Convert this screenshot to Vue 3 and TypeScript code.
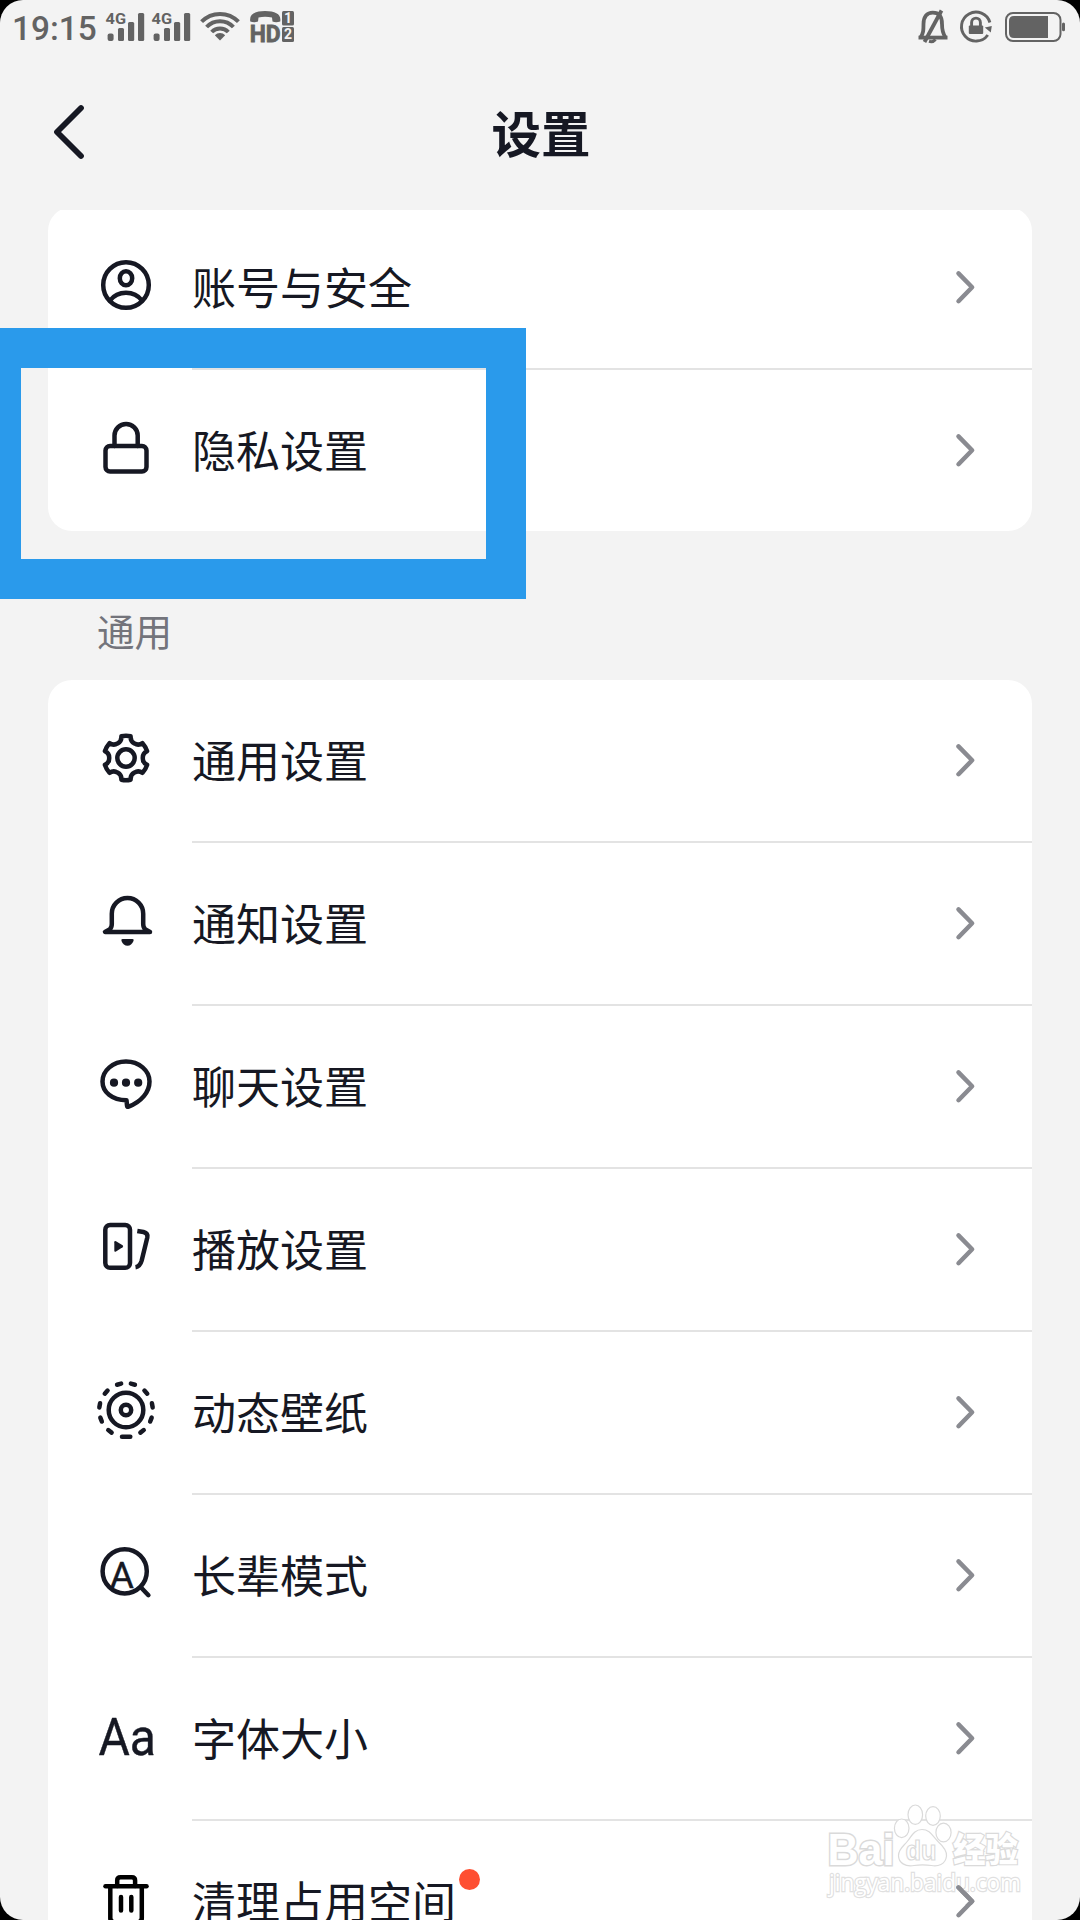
<script setup lang="ts">
type IconName =
  | 'account' | 'lock' | 'gear' | 'bell' | 'chat'
  | 'play' | 'wallpaper' | 'elder' | 'font' | 'trash'

interface Item {
  icon: IconName
  label: string
  dot?: boolean
}

interface Group {
  title?: string
  items: Item[]
}

const groups: Group[] = [
  {
    items: [
      { icon: 'account', label: '账号与安全' },
      { icon: 'lock', label: '隐私设置' },
    ],
  },
  {
    title: '通用',
    items: [
      { icon: 'gear', label: '通用设置' },
      { icon: 'bell', label: '通知设置' },
      { icon: 'chat', label: '聊天设置' },
      { icon: 'play', label: '播放设置' },
      { icon: 'wallpaper', label: '动态壁纸' },
      { icon: 'elder', label: '长辈模式' },
      { icon: 'font', label: '字体大小' },
      { icon: 'trash', label: '清理占用空间', dot: true },
    ],
  },
]

/* Point on the 60×60 icon grid; 0° points up, angles run clockwise. */
const polar = (r: number, deg: number): string => {
  const a = (deg * Math.PI) / 180
  return `${(30 + r * Math.sin(a)).toFixed(2)} ${(30 - r * Math.cos(a)).toFixed(2)}`
}

/* Six-toothed cog outline. */
const gearPath = ((): string => {
  let d = `M${polar(22.2, -12)}`
  for (let k = 0; k < 6; k++) {
    const a = k * 60
    d += `Q${polar(22.7, a)} ${polar(22.2, a + 12)}`
    d += `Q${polar(17.3, a + 14)} ${polar(16.8, a + 30)}`
    d += `Q${polar(17.3, a + 46)} ${polar(22.2, a + 48)}`
  }
  return d + 'Z'
})()

const dashAngles: number[] = [37, 69, 100, 132, 165, 195, 228, 260, 291, 323]
</script>

<template>
  <div class="phone">
    <header class="status">
      <span class="time">19:15</span>
      <svg class="status-left" width="190" height="44" viewBox="105 0 190 44">
        <g v-for="x in [0, 46]" :key="x" :transform="`translate(${x} 0)`" fill="#636363">
          <text x="105.6" y="24" class="net" textLength="20.5" lengthAdjust="spacingAndGlyphs">4G</text>
          <rect x="107.6" y="33.6" width="6" height="7.4" rx="2" />
          <rect x="118" y="28" width="6" height="13" rx="1.5" />
          <rect x="128" y="22" width="6.2" height="19" rx="1.5" />
          <rect x="138" y="13" width="6.2" height="28" rx="1.5" />
        </g>
        <g fill="none" stroke="#636363" stroke-width="4">
          <path d="M201.6 21.7A25.6 25.6 0 0 1 238.4 21.7" />
          <path d="M206.6 27A18.4 18.4 0 0 1 233.4 27" />
          <path d="M211.7 32A11.4 11.4 0 0 1 228.3 32" />
        </g>
        <path d="M220 40.5L214.8 35.2A7.4 7.4 0 0 1 225.2 35.2Z" fill="#636363" />
        <path d="M250.3 21.5C249 14.5 254 11 265 11C276 11 281.5 14.5 280.2 21.5Q276 23 272.5 21.5L272 17.5Q265 15.8 258.5 17.5L258 21.5Q254 23 250.3 21.5Z" fill="#636363" />
        <text x="249.7" y="41.6" class="hd" textLength="31" lengthAdjust="spacingAndGlyphs">HD</text>
        <rect x="282" y="11" width="12" height="14.4" rx="1.5" fill="#636363" />
        <rect x="282" y="27" width="12" height="15" rx="1.5" fill="#636363" />
        <text x="288" y="23" class="sim">1</text>
        <text x="288" y="39.3" class="sim">2</text>
      </svg>
      <svg class="status-right" width="150" height="44" viewBox="917 0 150 44">
        <g fill="none" stroke="#636363" stroke-width="3.8">
          <path d="M918.5 37.6H947.5" />
          <path d="M920.5 37.5C923.5 33 923.5 30 923.5 24C923.5 16.5 927 12.7 932.8 12.7C938.5 12.7 942 16.5 942 24C942 30 942.5 33 945.5 37.5" />
          <path d="M929 41.3Q933 42.5 935.5 39.5" stroke-width="3" />
          <path d="M924.5 42L941.5 10.5" />
        </g>
        <g fill="none" stroke="#636363" stroke-width="2.9">
          <path d="M987.8 35A14.5 14.5 0 1 1 989.9 22.5" />
          <path d="M971.6 26V22.5A4.4 4.4 0 0 1 980.4 22.5V26" />
        </g>
        <path d="M984.8 27.5L991.8 26L990.8 32.5Z" fill="#636363" />
        <rect x="968.8" y="25.6" width="14.4" height="8.4" rx="1" fill="#636363" />
        <rect x="1006" y="13" width="54.5" height="28" rx="7" fill="none" stroke="#636363" stroke-width="2" />
        <path d="M1048 16V38H1014Q1009 38 1009 33V21Q1009 16 1014 16Z" fill="#636363" />
        <rect x="1062" y="22.6" width="3" height="8.6" rx="1.5" fill="#636363" />
      </svg>
    </header>

    <nav class="nav">
      <svg class="back" width="40" height="60" viewBox="0 0 40 60">
        <path d="M31 6L7 30L31 54" fill="none" stroke="#161823" stroke-width="5.8" stroke-linecap="round" stroke-linejoin="round" />
      </svg>
      <h1>设置</h1>
    </nav>

    <main class="content">
      <section v-for="(group, gi) in groups" :key="gi" class="group">
        <h2 v-if="group.title">{{ group.title }}</h2>
        <ul class="card">
          <li v-for="item in group.items" :key="item.icon" class="row">
            <svg class="icon" :class="item.icon" width="60" height="60" viewBox="0 0 60 60">
              <template v-if="item.icon === 'account'">
                <circle cx="30" cy="30" r="22.8" />
                <ellipse cx="30" cy="23.2" rx="6.2" ry="7" />
                <path d="M14 45.5C18 40.2 23.5 37.7 30 37.7S42 40.2 46 45.5" />
              </template>
              <template v-else-if="item.icon === 'lock'">
                <rect x="9.5" y="27.9" width="41" height="25.6" rx="4.5" />
                <path d="M18.5 28V17.5A11.6 11.6 0 0 1 41.7 17.5V28" />
              </template>
              <template v-else-if="item.icon === 'gear'">
                <path :d="gearPath" />
                <circle cx="30" cy="30" r="8.7" />
              </template>
              <template v-else-if="item.icon === 'bell'">
                <path d="M9 41H54L49.5 38.5Q47.2 37 47.2 33V22.8A15.7 15.7 0 0 0 15.8 22.8V33Q15.8 37 13.5 38.5Z" />
                <path class="solid" d="M26.5 48H36.5Q38.3 48 37.5 50Q35.5 54.7 31.5 54.7Q27.3 54.7 25.5 50Q24.8 48 26.5 48Z" />
              </template>
              <template v-else-if="item.icon === 'chat'">
                <path d="M30.5 46.3C16 46.3 6.5 38 6.5 27.5C6.5 16.5 17 7.5 30 7.5C43 7.5 53.5 16.5 53.5 27.5C53.5 38 45.5 47.5 32.5 52.7Q31 53.2 31 51.5Z" />
                <circle class="solid" cx="18" cy="28.7" r="4.1" />
                <circle class="solid" cx="30" cy="28.7" r="4.1" />
                <circle class="solid" cx="42.2" cy="28.7" r="4.1" />
              </template>
              <template v-else-if="item.icon === 'play'">
                <rect x="9.3" y="8" width="24.7" height="42.7" rx="4.8" />
                <path class="solid" d="M18.3 25.3Q18.3 23.5 20 24.3L26.6 28.3Q27.8 29.3 26.6 30.3L20 34.4Q18.3 35.2 18.3 33.4Z" />
                <path class="butt" d="M41.3 14L47.5 15Q52.2 16.2 51.3 20.5L45.7 43.5Q44 49.6 39.5 50.2" />
              </template>
              <template v-else-if="item.icon === 'wallpaper'">
                <circle cx="30" cy="30" r="17.3" />
                <circle cx="30" cy="30" r="5.2" />
                <path d="M26 56.7H34.3" />
                <path v-for="a in dashAngles" :key="a" d="M27.9 56.7H32.1" :transform="`rotate(${-a} 30 30)`" />
              </template>
              <template v-else-if="item.icon === 'elder'">
                <circle cx="28.7" cy="28.3" r="22.1" />
                <path d="M45.5 45L52.4 52.2" />
                <text x="25.8" y="45" class="letter">A</text>
              </template>
              <template v-else-if="item.icon === 'font'">
                <text x="2.4" y="48.8" class="letters" textLength="57.5" lengthAdjust="spacingAndGlyphs">Aa</text>
              </template>
              <template v-else>
                <path d="M9.5 17.3H50.5" />
                <path d="M21.2 17V11.5Q21.2 8.2 24.5 8.2H35.8Q39.1 8.2 39.1 11.5V17" />
                <path d="M14.3 17.3V49Q14.3 53.3 18.6 53.3H41.5Q45.8 53.3 45.8 49V17.3" />
                <path d="M25 28V41.5M35.3 28V41.5" />
              </template>
            </svg>
            <div class="cell">
              <span class="label">{{ item.label }}<i v-if="item.dot" class="dot"></i></span>
              <svg class="chevron" width="24" height="36" viewBox="0 0 24 36">
                <path d="M4.5 3.4L18.1 17.3L4.5 31.2" />
              </svg>
            </div>
          </li>
        </ul>
      </section>
    </main>

    <svg class="watermark" width="210" height="110" viewBox="820 1795 210 110">
      <g fill="#fff" stroke="#dadada" stroke-width="1.2">
        <ellipse cx="901.7" cy="1828.3" rx="7.3" ry="9.3" />
        <ellipse cx="915.3" cy="1814.7" rx="7.3" ry="9.7" />
        <ellipse cx="933" cy="1816" rx="7.3" ry="9.3" />
        <ellipse cx="943.5" cy="1832.5" rx="7.6" ry="9.3" />
        <path d="M922 1829.5C930 1829.5 932.5 1836 938 1841.5C944 1847 947 1851 946.5 1856C945.500 1865 937.5 1866.5 931.5 1865.5C925 1864.5 920 1864.5 914 1865.5C905.5 1867 898.5 1863 898.5 1855.5C898.5 1848.5 904 1846 908 1840.5C912.5 1834.5 915 1829.5 922 1829.5Z" />
        <text x="827.5" y="1864.5" class="wm-latin" textLength="67" lengthAdjust="spacingAndGlyphs">Bai</text>
        <text x="905.5" y="1859.5" class="wm-du" textLength="31" lengthAdjust="spacingAndGlyphs">du</text>
        <text x="953" y="1862" class="wm-cjk" textLength="65" lengthAdjust="spacingAndGlyphs">经验</text>
        <text x="829" y="1890.5" class="wm-url" textLength="192" lengthAdjust="spacingAndGlyphs">jingyan.baidu.com</text>
      </g>
      <path d="M958.5 1887.4L972.1 1901.3L958.5 1915.2" class="chevron" />
    </svg>
    <div class="highlight"></div>
  </div>
</template>

<style>
html,
body {
  margin: 0;
  background: #000;
}
</style>

<style scoped>
.phone {
  position: relative;
  display: flex;
  flex-direction: column;
  width: 1080px;
  height: 1920px;
  overflow: hidden;
  border-radius: 23px;
  background: #f3f3f3;
  color: #161823;
  font-family: "Noto Sans CJK SC", sans-serif;
}

.status {
  display: flex;
  flex: none;
  align-items: flex-start;
  height: 52px;
  padding: 0 13px 0 12px;
  color: #636363;
}

.time {
  width: 93px;
  font: 500 33.4px/38px Roboto, sans-serif;
  padding-top: 10px;
}

.status-left {
  display: block;
}

.status-right {
  display: block;
  margin-left: auto;
}

.net {
  font: 700 14.5px Roboto, sans-serif;
}

.hd {
  fill: #636363;
  stroke: #636363;
  stroke-width: 0.8px;
  font: 700 24.5px Roboto, sans-serif;
}

.sim {
  fill: #f3f3f3;
  font: 700 14px Roboto, sans-serif;
  text-anchor: middle;
}

.nav {
  display: grid;
  flex: none;
  grid-template-columns: 120px 1fr 120px;
  align-items: center;
  height: 158px;
}

.back {
  display: block;
  margin: 2px 0 0 50px;
}

h1 {
  margin: 2px 0 0 2px;
  font-size: 49.5px;
  line-height: 72px;
  font-weight: 700;
  text-align: center;
}

.content {
  flex: 1;
  min-height: 0;
  overflow: hidden;
  padding: 0 48px;
}

.group:first-child {
  margin-top: -3px;
}

h2 {
  height: 77px;
  margin: 0;
  padding: 72px 0 0 49px;
  color: #73747b;
  font-size: 37.5px;
  line-height: 54px;
  font-weight: 400;
}

.card {
  margin: 0;
  padding: 0;
  overflow: hidden;
  border-radius: 24px;
  background: #fff;
  list-style: none;
}

.row {
  display: flex;
  align-items: center;
  padding-left: 48px;
}

.icon {
  flex: none;
  margin-bottom: 7px;
  fill: none;
  stroke: #161823;
  stroke-width: 4.5px;
  stroke-linecap: round;
  stroke-linejoin: round;
}

.icon.trash {
  stroke: #000;
}

.solid {
  fill: #161823;
  stroke: none;
}

.butt {
  stroke-linecap: butt;
}

.letter,
.letters {
  fill: #161823;
  stroke: #161823;
  stroke-width: 0.4px;
  font-family: Roboto, sans-serif;
}

.letter {
  font-size: 37px;
  text-anchor: middle;
}

.letters {
  font-size: 51.5px;
}

.cell {
  display: flex;
  flex: 1;
  align-items: center;
  justify-content: space-between;
  height: 161px;
  margin-left: 36px;
  padding-right: 54px;
  border-bottom: 2px solid #e3e3e3;
}

.row:last-child .cell {
  border-bottom: 0;
}

.row:last-child .icon {
  margin-bottom: 5px;
}

.label {
  position: relative;
  margin-bottom: 4px;
  font-size: 44px;
  line-height: 64px;
}

.dot {
  position: absolute;
  top: 1px;
  right: -24px;
  width: 21px;
  height: 21px;
  border-radius: 50%;
  background: #fe4f32;
}

.chevron {
  flex: none;
  fill: none;
  stroke: #8a8b91;
  stroke-width: 4.5px;
  stroke-linecap: round;
  stroke-linejoin: round;
}

.highlight {
  position: absolute;
  top: 328px;
  left: -19px;
  box-sizing: border-box;
  width: 545px;
  height: 271px;
  border: 40px solid #2a9aeb;
}

.watermark {
  position: absolute;
  top: 1795px;
  left: 820px;
}

.wm-latin {
  stroke-width: 3px;
  paint-order: stroke;
  font: 700 45px "Liberation Sans", sans-serif;
}

.wm-du {
  font: 700 28px "Liberation Sans", sans-serif;
}

.wm-cjk {
  stroke-width: 2.4px;
  paint-order: stroke;
  font: 900 34px "Noto Sans CJK SC", sans-serif;
}

.wm-url {
  stroke: #e0e0e0;
  stroke-width: 2.4px;
  paint-order: stroke;
  font: 400 24px "Open Sans", sans-serif;
}
</style>
